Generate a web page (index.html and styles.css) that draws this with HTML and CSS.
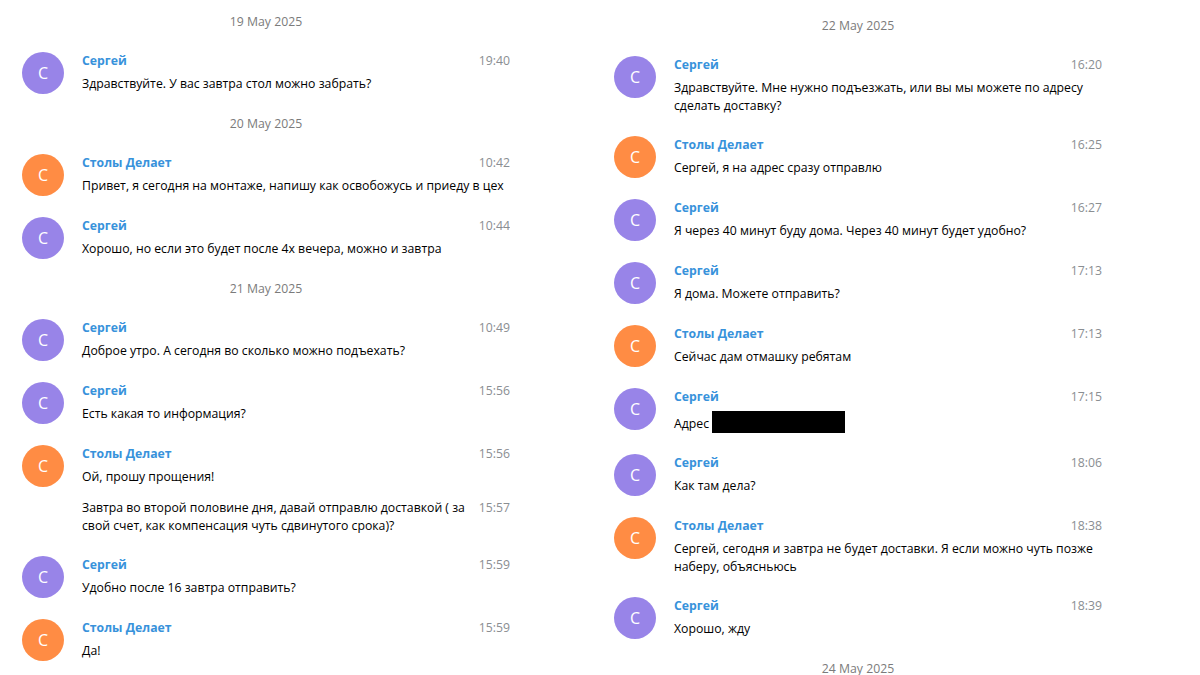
FILE: index.html
```html
<!DOCTYPE html>
<html lang="ru">
<head>
<meta charset="utf-8">
<title>Chat history</title>
<link rel="stylesheet" href="styles.css">
</head>
<body>
<div class="page">
  <div class="column column-left">
    <div class="service">19 May 2025</div>
    <div class="message">
      <div class="userpic purple">С</div>
      <div class="body">
        <div class="meta"><span class="time">19:40</span><span class="from">Сергей</span></div>
        <div class="text">Здравствуйте. У вас завтра стол можно забрать?</div>
      </div>
    </div>
    <div class="service">20 May 2025</div>
    <div class="message">
      <div class="userpic orange">С</div>
      <div class="body">
        <div class="meta"><span class="time">10:42</span><span class="from">Столы Делает</span></div>
        <div class="text">Привет, я сегодня на монтаже, напишу как освобожусь и приеду в цех</div>
      </div>
    </div>
    <div class="message">
      <div class="userpic purple">С</div>
      <div class="body">
        <div class="meta"><span class="time">10:44</span><span class="from">Сергей</span></div>
        <div class="text">Хорошо, но если это будет после 4х вечера, можно и завтра</div>
      </div>
    </div>
    <div class="service">21 May 2025</div>
    <div class="message">
      <div class="userpic purple">С</div>
      <div class="body">
        <div class="meta"><span class="time">10:49</span><span class="from">Сергей</span></div>
        <div class="text">Доброе утро. А сегодня во сколько можно подъехать?</div>
      </div>
    </div>
    <div class="message">
      <div class="userpic purple">С</div>
      <div class="body">
        <div class="meta"><span class="time">15:56</span><span class="from">Сергей</span></div>
        <div class="text">Есть какая то информация?</div>
      </div>
    </div>
    <div class="message">
      <div class="userpic orange">С</div>
      <div class="body">
        <div class="meta"><span class="time">15:56</span><span class="from">Столы Делает</span></div>
        <div class="text">Ой, прошу прощения!</div>
      </div>
    </div>
    <div class="message joined">
      <div class="body">
        <div class="text"><span class="time">15:57</span>Завтра во второй половине дня, давай отправлю доставкой ( за свой счет, как компенсация чуть сдвинутого срока)?</div>
      </div>
    </div>
    <div class="message">
      <div class="userpic purple">С</div>
      <div class="body">
        <div class="meta"><span class="time">15:59</span><span class="from">Сергей</span></div>
        <div class="text">Удобно после 16 завтра отправить?</div>
      </div>
    </div>
    <div class="message">
      <div class="userpic orange">С</div>
      <div class="body">
        <div class="meta"><span class="time">15:59</span><span class="from">Столы Делает</span></div>
        <div class="text">Да!</div>
      </div>
    </div>
  </div>

  <div class="column column-right">
    <div class="service">22 May 2025</div>
    <div class="message">
      <div class="userpic purple">С</div>
      <div class="body">
        <div class="meta"><span class="time">16:20</span><span class="from">Сергей</span></div>
        <div class="text">Здравствуйте. Мне нужно подъезжать, или вы мы можете по адресу сделать доставку?</div>
      </div>
    </div>
    <div class="message">
      <div class="userpic orange">С</div>
      <div class="body">
        <div class="meta"><span class="time">16:25</span><span class="from">Столы Делает</span></div>
        <div class="text">Сергей, я на адрес сразу отправлю</div>
      </div>
    </div>
    <div class="message">
      <div class="userpic purple">С</div>
      <div class="body">
        <div class="meta"><span class="time">16:27</span><span class="from">Сергей</span></div>
        <div class="text">Я через 40 минут буду дома. Через 40 минут будет удобно?</div>
      </div>
    </div>
    <div class="message">
      <div class="userpic purple">С</div>
      <div class="body">
        <div class="meta"><span class="time">17:13</span><span class="from">Сергей</span></div>
        <div class="text">Я дома. Можете отправить?</div>
      </div>
    </div>
    <div class="message">
      <div class="userpic orange">С</div>
      <div class="body">
        <div class="meta"><span class="time">17:13</span><span class="from">Столы Делает</span></div>
        <div class="text">Сейчас дам отмашку ребятам</div>
      </div>
    </div>
    <div class="message">
      <div class="userpic purple">С</div>
      <div class="body">
        <div class="meta"><span class="time">17:15</span><span class="from">Сергей</span></div>
        <div class="text">Адрес <span class="redacted"></span></div>
      </div>
    </div>
    <div class="message">
      <div class="userpic purple">С</div>
      <div class="body">
        <div class="meta"><span class="time">18:06</span><span class="from">Сергей</span></div>
        <div class="text">Как там дела?</div>
      </div>
    </div>
    <div class="message">
      <div class="userpic orange">С</div>
      <div class="body">
        <div class="meta"><span class="time">18:38</span><span class="from">Столы Делает</span></div>
        <div class="text">Сергей, сегодня и завтра не будет доставки. Я если можно чуть позже наберу, объясньюсь</div>
      </div>
    </div>
    <div class="message">
      <div class="userpic purple">С</div>
      <div class="body">
        <div class="meta"><span class="time">18:39</span><span class="from">Сергей</span></div>
        <div class="text">Хорошо, жду</div>
      </div>
    </div>
    <div class="service">24 May 2025</div>
  </div>
</div>
</body>
</html>
```

FILE: styles.css
```css
html, body {
  margin: 0;
  padding: 0;
  background: #ffffff;
}

body {
  font-family: "Open Sans", "Liberation Sans", sans-serif;
  font-size: 12.25px;
  line-height: 18px;
  color: #000000;
  overflow: hidden;
  height: 675px;
}

.page {
  display: flex;
  align-items: flex-start;
  gap: 104px;
  padding-left: 22px;
}

.column {
  width: 488px;
  flex: none;
}

.column-left {
  padding-top: 3px;
}

.column-right {
  padding-top: 7px;
}

.service {
  text-align: center;
  color: #7b7b7b;
  padding: 10px 0 11px;
}

.message {
  display: flex;
  align-items: flex-start;
  padding: 10px 0 11px;
}

.message.joined {
  padding-top: 1px;
  padding-left: 60px;
}

.userpic {
  width: 42px;
  height: 42px;
  border-radius: 50%;
  flex: none;
  color: #ffffff;
  font-size: 16px;
  line-height: 42px;
  text-align: center;
  margin-right: 18px;
}

.userpic.purple {
  background: #9884e8;
}

.userpic.orange {
  background: #ff8c44;
}

.body {
  flex: 1;
  min-width: 0;
}

.meta {
  padding-bottom: 5px;
  overflow: hidden;
}

.from {
  color: #3892db;
  font-weight: 700;
}

.time {
  float: right;
  color: #8a8e92;
  margin-left: 6px;
}

.text {
  word-wrap: break-word;
}

.redacted {
  display: inline-block;
  width: 133px;
  height: 22px;
  background: #000000;
  vertical-align: -5px;
}
```
